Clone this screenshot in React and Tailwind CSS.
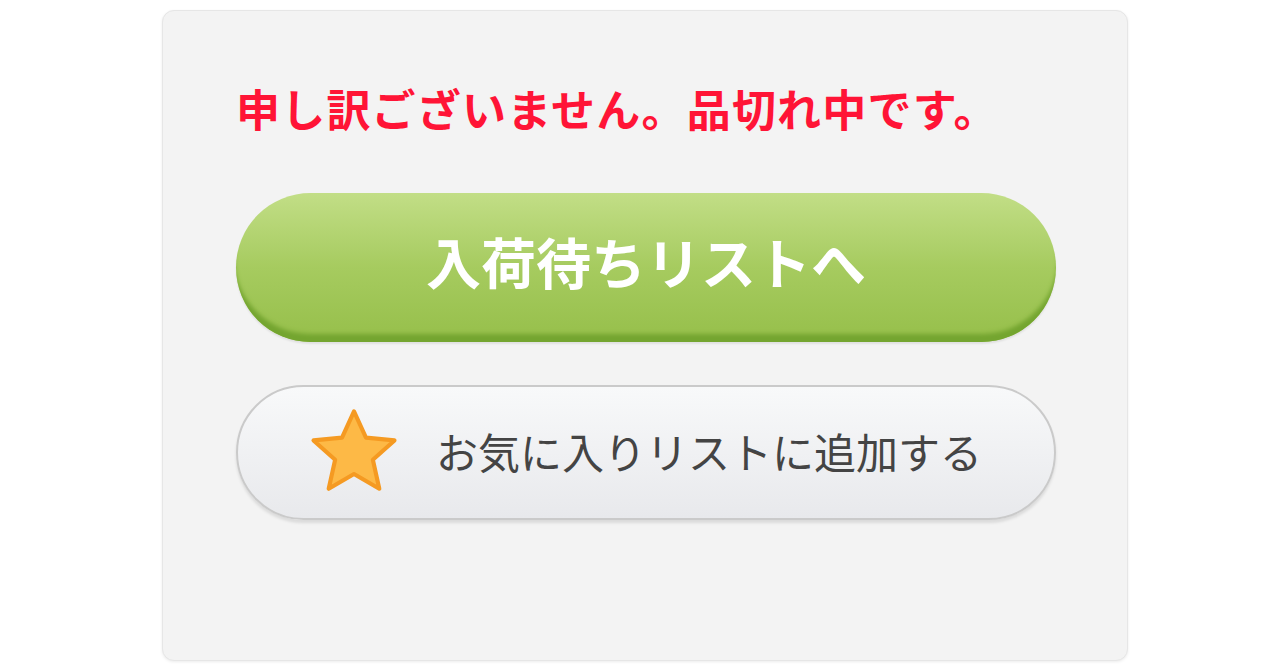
function StarIcon() {
  return (
    <svg viewBox="0 0 100 100" className="h-[92px] w-[92px] shrink-0">
      <polygon
        points="50,7 63,35.5 94,38.5 70.5,59.5 77.5,91 50,75 22.5,91 29.5,59.5 6,38.5 37,35.5"
        fill="#fdb946"
        stroke="#f59a22"
        strokeWidth="4.5"
        strokeLinejoin="round"
      />
    </svg>
  );
}

export default function App() {
  return (
    <div
      className="min-h-screen bg-white pt-[10px]"
      style={{ fontFamily: '"Noto Sans CJK JP", sans-serif' }}
    >
      <div className="ml-[162px] h-[651px] w-[966px] rounded-xl border border-[#e6e6e6] bg-[#f3f3f3] pl-[73px] pr-[73px] pt-[75px] shadow-[0_1px_3px_rgba(0,0,0,0.08)]">
        {/* sold out notice */}
        <p className="text-[44px] font-bold leading-[44px] tracking-[1.2px] text-[#ff1436]">
          申し訳ございません。品切れ中です。
        </p>

        {/* restock waitlist */}
        <button
          type="button"
          className="mt-[63px] flex h-[149px] w-[820px] items-center justify-center rounded-full bg-gradient-to-b from-[#c2de86] via-[#a6cb5f] to-[#96bf4a] pb-[14px] text-[55px] font-bold text-white shadow-[inset_0_-10px_4px_-2px_#74a530,0_2px_2px_rgba(0,0,0,0.08)]"
        >
          入荷待ちリストへ
        </button>

        {/* favorites */}
        <button
          type="button"
          className="mt-[43px] flex h-[135px] w-[820px] items-center rounded-full border-2 border-[#cacaca] bg-gradient-to-b from-[#f8f9fa] to-[#e8e9ec] pb-[4px] pl-[70px] text-[42px] text-[#444] shadow-[0_3px_3px_rgba(0,0,0,0.1)]"
        >
          <StarIcon />
          <span className="ml-[36px]">お気に入りリストに追加する</span>
        </button>
      </div>
    </div>
  );
}
